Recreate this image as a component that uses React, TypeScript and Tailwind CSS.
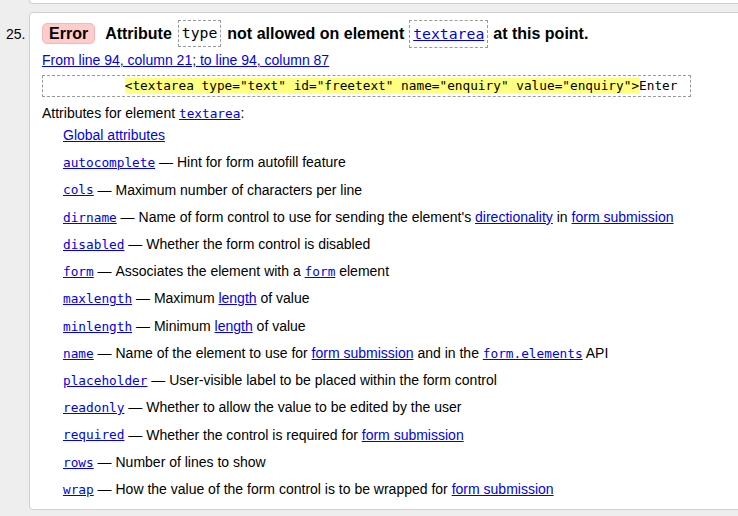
const sans = "font-['Liberation_Sans',Arial,sans-serif]";
const mono = "font-['DejaVu_Sans_Mono',monospace]";

type Part = string | { link: string; code?: boolean };

interface AttrRow {
  name: string;
  desc: Part[];
}

const rows: AttrRow[] = [
  { name: 'autocomplete', desc: ['Hint for form autofill feature'] },
  { name: 'cols', desc: ['Maximum number of characters per line'] },
  {
    name: 'dirname',
    desc: [
      "Name of form control to use for sending the element's ",
      { link: 'directionality' },
      ' in ',
      { link: 'form submission' },
    ],
  },
  { name: 'disabled', desc: ['Whether the form control is disabled'] },
  { name: 'form', desc: ['Associates the element with a ', { link: 'form', code: true }, ' element'] },
  { name: 'maxlength', desc: ['Maximum ', { link: 'length' }, ' of value'] },
  { name: 'minlength', desc: ['Minimum ', { link: 'length' }, ' of value'] },
  {
    name: 'name',
    desc: [
      'Name of the element to use for ',
      { link: 'form submission' },
      ' and in the ',
      { link: 'form.elements', code: true },
      ' API',
    ],
  },
  { name: 'placeholder', desc: ['User-visible label to be placed within the form control'] },
  { name: 'readonly', desc: ['Whether to allow the value to be edited by the user'] },
  { name: 'required', desc: ['Whether the control is required for ', { link: 'form submission' }] },
  { name: 'rows', desc: ['Number of lines to show'] },
  {
    name: 'wrap',
    desc: ['How the value of the form control is to be wrapped for ', { link: 'form submission' }],
  },
];

function CodeLink({ children }: { children: string }) {
  return <a href="#" className={`${mono} text-[12.75px] text-[#0000ee] underline`}>{children}</a>;
}

function TextLink({ children }: { children: string }) {
  return <a href="#" className="text-[#0000ee] underline">{children}</a>;
}

export default function App() {
  return (
    <div className={`${sans} h-[516px] w-[738px] overflow-hidden bg-[#eeeeee] text-[14px] text-black`}>
      {/* tail of the previous message */}
      <div className="ml-[29px] h-[4px] rounded-bl-[4px] border-b border-l border-[#cfcfcf] bg-white" />

      <div className="mt-[8px] flex">
        <div className="w-[29px] shrink-0 pl-[6px] pt-[14px] leading-[17px]">25.</div>

        <div className="-mr-[10px] flex-1 rounded-[4px] border border-[#cfcfcf] bg-white pb-[6px] pl-[12px] pt-[8px]">
          {/* heading */}
          <div className="flex h-[25px] items-center text-[16px] font-bold">
            <span className="flex h-[21px] items-center rounded-[5px] border border-[#f2b8b8] bg-[#ffcccc] px-[6px]">
              Error
            </span>
            <span className="ml-[10px]">Attribute</span>
            <span className={`${mono} ml-[6px] border border-dashed border-[#9a9a9a] px-[3px] py-[1px] text-[14.75px] font-normal`}>
              type
            </span>
            <span className="ml-[6px]">not allowed on element</span>
            <span className="ml-[5px] border border-dashed border-[#9a9a9a] px-[3px] py-[1px]">
              <a href="#" className={`${mono} text-[14.75px] font-normal text-[#0000ee] underline`}>
                textarea
              </a>
            </span>
            <span className="ml-[5px]">at this point.</span>
          </div>

          <div className="mt-[6px] leading-[17px]">
            <TextLink>From line 94, column 21; to line 94, column 87</TextLink>
          </div>

          <div className="mt-[6px] h-[22px] w-[649px] border border-dashed border-[#9a9a9a] pl-[5px]">
            <pre className={`${mono} text-[12.75px] leading-[20px]`}>
              {'          '}
              <span className="bg-[#ffff80]">{'<textarea type="text" id="freetext" name="enquiry" value="enquiry">'}</span>
              Enter
            </pre>
          </div>

          <div className="mt-[8px] leading-[17px]">
            Attributes for element <CodeLink>textarea</CodeLink>:
          </div>

          <div className="pl-[21px]">
            <div className="flex h-[27.23px] items-center">
              <TextLink>Global attributes</TextLink>
            </div>
            {rows.map((row) => (
              <div key={row.name} className="flex h-[27.23px] items-center whitespace-pre">
                <CodeLink>{row.name}</CodeLink>
                <span>{' — '}</span>
                {row.desc.map((part, i) =>
                  typeof part === 'string' ? (
                    <span key={i}>{part}</span>
                  ) : part.code ? (
                    <CodeLink key={i}>{part.link}</CodeLink>
                  ) : (
                    <TextLink key={i}>{part.link}</TextLink>
                  )
                )}
              </div>
            ))}
          </div>
        </div>
      </div>
    </div>
  );
}
